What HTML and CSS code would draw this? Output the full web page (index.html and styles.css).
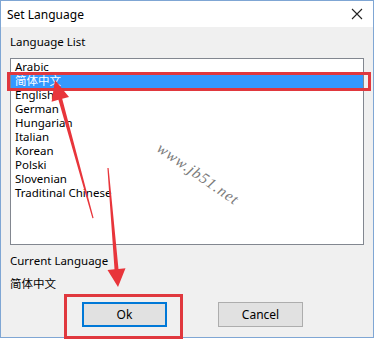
FILE: index.html
```html
<!DOCTYPE html>
<html lang="en">
<head>
    <meta charset="UTF-8">
    <title>Set Language</title>
    <link rel="stylesheet" href="styles.css">
</head>
<body>
    <div class="window">
        <div class="titlebar">
            <span class="title">Set Language</span>
            <svg class="close" width="12" height="12" viewBox="0 0 12 12">
                <path d="M1 1 L11 11 M11 1 L1 11" stroke="#222" stroke-width="1.1" fill="none"/>
            </svg>
        </div>
        <div class="content">
            <div class="label">Language List</div>
            <ul class="listbox">
                <li>Arabic</li>
                <li class="selected">简体中文</li>
                <li>English</li>
                <li>German</li>
                <li>Hungarian</li>
                <li>Italian</li>
                <li>Korean</li>
                <li>Polski</li>
                <li>Slovenian</li>
                <li>Traditinal Chinese</li>
            </ul>
            <div class="label current-label">Current Language</div>
            <div class="current-value">简体中文</div>
            <div class="buttons">
                <button class="btn btn-default">Ok</button>
                <button class="btn">Cancel</button>
            </div>
        </div>
    </div>

    <!-- annotations drawn on top of the screenshot -->
    <div class="mark mark-item"></div>
    <div class="mark mark-ok"></div>
    <span class="watermark">www.jb51.net</span>
    <svg class="arrows" width="375" height="339" viewBox="0 0 375 339">
        <polygon fill="#e8353b" points="55,80 69,97 62.2,98.8 93.6,218 92.4,218.3 58.4,99.8 51.6,101.7"/>
        <polygon fill="#e8353b" points="118,287 125.5,268.3 118.5,268.9 108.6,168 107.4,168 114.5,269.3 107.5,269.9"/>
    </svg>
</body>
</html>
```

FILE: styles.css
```css
* {
    margin: 0;
    padding: 0;
    box-sizing: border-box;
}

body {
    width: 375px;
    height: 339px;
    background: #ffffff;
    font-family: 'Noto Sans', 'Noto Sans CJK SC', sans-serif;
    font-size: 11.5px;
    color: #000;
    position: relative;
    overflow: hidden;
}

.window {
    width: 374px;
    height: 338px;
    border: 1px solid #7fa6d4;
    display: flex;
    flex-direction: column;
    background: #f0f0f0;
}

.titlebar {
    height: 26px;
    background: #fff;
    display: flex;
    align-items: center;
    justify-content: space-between;
    padding: 0 10px 0 6px;
}

.title {
    font-size: 12px;
}

.content {
    flex: 1;
    padding: 0 9px;
    display: flex;
    flex-direction: column;
}

.label {
    height: 17px;
    line-height: 17px;
    margin-top: 6px;
}

.listbox {
    list-style: none;
    margin-top: 8px;
    height: 187px;
    background: #fff;
    border: 1px solid #828790;
    padding: 1px 0 0 4px;
}

.listbox li {
    height: 14px;
    line-height: 14px;
    white-space: nowrap;
}

.listbox li.selected {
    background: #3399ff;
    color: #fff;
    margin-left: -4px;
    padding-left: 4px;
}

.current-label {
    margin-top: 7px;
}

.current-value {
    height: 17px;
    line-height: 17px;
    margin-top: 6px;
}

.buttons {
    display: flex;
    gap: 51px;
    margin-top: 10px;
    padding-left: 72px;
}

.btn {
    width: 85px;
    height: 25px;
    background: #e1e1e1;
    border: 1px solid #adadad;
    font-family: inherit;
    font-size: 12px;
    color: #000;
}

.btn-default {
    border: 2px solid #0078d7;
}

.mark {
    position: absolute;
    border: 3px solid #e0383e;
}

.mark-item {
    left: 7px;
    top: 72px;
    width: 364px;
    height: 19px;
}

.mark-ok {
    left: 64px;
    top: 294px;
    width: 119px;
    height: 45px;
}

.watermark {
    position: absolute;
    left: 198px;
    top: 174px;
    transform: translate(-50%, -50%) rotate(35deg);
    font-family: 'Liberation Serif', serif;
    font-style: italic;
    font-size: 15.5px;
    letter-spacing: 1px;
    color: #7a7a7a;
    text-shadow: 0 0 2px #fff;
    white-space: nowrap;
}

.arrows {
    position: absolute;
    left: 0;
    top: 0;
}
```
